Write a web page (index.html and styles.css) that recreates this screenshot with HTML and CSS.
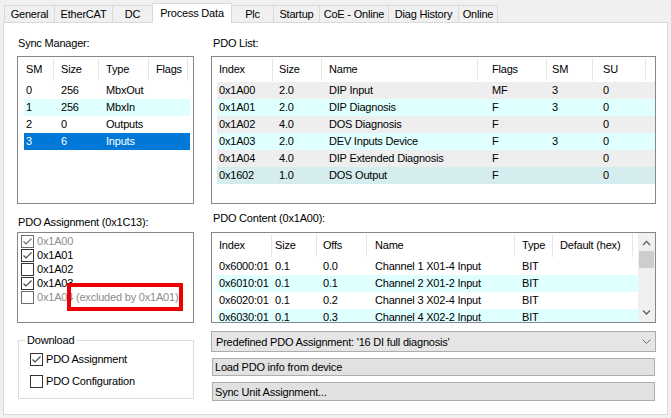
FILE: index.html
```html
<!DOCTYPE html>
<html>
<head>
<meta charset="utf-8">
<title>Process Data</title>
<link rel="stylesheet" href="styles.css">
</head>
<body>
<div class="tabbar">
  <div class="tab w-general">General</div>
  <div class="tab w-ethercat">EtherCAT</div>
  <div class="tab w-dc">DC</div>
  <div class="tab sel w-pd">Process Data</div>
  <div class="tab w-plc">Plc</div>
  <div class="tab w-startup">Startup</div>
  <div class="tab w-coe">CoE - Online</div>
  <div class="tab w-diag">Diag History</div>
  <div class="tab w-online">Online</div>
</div>
<div class="panel">
  <div class="col-left">
    <div class="lbl">Sync Manager:</div>
    <div class="lv sm">
      <div class="lv-head">
        <div class="th c1">SM</div><div class="th c2">Size</div><div class="th c3">Type</div><div class="th c4">Flags</div>
      </div>
      <div class="lv-body">
        <div class="tr"><div class="td c1">0</div><div class="td c2">256</div><div class="td c3">MbxOut</div><div class="td c4"></div></div>
        <div class="tr cyan"><div class="td c1">1</div><div class="td c2">256</div><div class="td c3">MbxIn</div><div class="td c4"></div></div>
        <div class="tr"><div class="td c1">2</div><div class="td c2">0</div><div class="td c3">Outputs</div><div class="td c4"></div></div>
        <div class="tr selrow"><div class="td c1">3</div><div class="td c2">6</div><div class="td c3">Inputs</div><div class="td c4"></div></div>
      </div>
    </div>

    <div class="lbl lbl-assign">PDO Assignment (0x1C13):</div>
    <div class="assign">
      <div class="ck-row dis"><span class="cb"><svg viewBox="0 0 11 11" width="11" height="11"><path d="M1.5 5.5 L4 8 L9.5 2.5" /></svg></span><span class="ck-text">0x1A00</span></div>
      <div class="ck-row"><span class="cb"><svg viewBox="0 0 11 11" width="11" height="11"><path d="M1.5 5.5 L4 8 L9.5 2.5" /></svg></span><span class="ck-text">0x1A01</span></div>
      <div class="ck-row"><span class="cb"></span><span class="ck-text">0x1A02</span></div>
      <div class="ck-row"><span class="cb"><svg viewBox="0 0 11 11" width="11" height="11"><path d="M1.5 5.5 L4 8 L9.5 2.5" /></svg></span><span class="ck-text">0x1A03</span></div>
      <div class="ck-row dis"><span class="cb"></span><span class="ck-text">0x1A04 (excluded by 0x1A01)</span></div>
      <div class="redmark"></div>
    </div>

    <fieldset class="download">
      <legend>Download</legend>
      <div class="dl-row"><span class="cb"><svg viewBox="0 0 11 11" width="11" height="11"><path d="M1.5 5.5 L4 8 L9.5 2.5" /></svg></span><span class="ck-text">PDO Assignment</span></div>
      <div class="dl-row"><span class="cb"></span><span class="ck-text">PDO Configuration</span></div>
    </fieldset>
  </div>

  <div class="col-right">
    <div class="lbl">PDO List:</div>
    <div class="lv pl">
      <div class="lv-head">
        <div class="th c1">Index</div><div class="th c2">Size</div><div class="th c3">Name</div><div class="th c4">Flags</div><div class="th c5">SM</div><div class="th c6">SU</div>
      </div>
      <div class="lv-body">
        <div class="tr gray"><div class="td c1">0x1A00</div><div class="td c2">2.0</div><div class="td c3">DIP Input</div><div class="td c4">MF</div><div class="td c5">3</div><div class="td c6">0</div></div>
        <div class="tr cyan"><div class="td c1">0x1A01</div><div class="td c2">2.0</div><div class="td c3">DIP Diagnosis</div><div class="td c4">F</div><div class="td c5">3</div><div class="td c6">0</div></div>
        <div class="tr gray"><div class="td c1">0x1A02</div><div class="td c2">4.0</div><div class="td c3">DOS Diagnosis</div><div class="td c4">F</div><div class="td c5"></div><div class="td c6">0</div></div>
        <div class="tr cyan"><div class="td c1">0x1A03</div><div class="td c2">2.0</div><div class="td c3">DEV Inputs Device</div><div class="td c4">F</div><div class="td c5">3</div><div class="td c6">0</div></div>
        <div class="tr gray"><div class="td c1">0x1A04</div><div class="td c2">4.0</div><div class="td c3">DIP Extended Diagnosis</div><div class="td c4">F</div><div class="td c5"></div><div class="td c6">0</div></div>
        <div class="tr teal"><div class="td c1">0x1602</div><div class="td c2">1.0</div><div class="td c3">DOS Output</div><div class="td c4">F</div><div class="td c5"></div><div class="td c6">0</div></div>
      </div>
    </div>

    <div class="lbl lbl-content">PDO Content (0x1A00):</div>
    <div class="lv pc">
      <div class="pc-main">
        <div class="lv-head">
          <div class="th c1">Index</div><div class="th c2">Size</div><div class="th c3">Offs</div><div class="th c4">Name</div><div class="th c5">Type</div><div class="th c6">Default (hex)</div>
        </div>
        <div class="lv-body">
          <div class="tr"><div class="td c1">0x6000:01</div><div class="td c2">0.1</div><div class="td c3">0.0</div><div class="td c4">Channel 1 X01-4 Input</div><div class="td c5">BIT</div><div class="td c6"></div></div>
          <div class="tr cyan"><div class="td c1">0x6010:01</div><div class="td c2">0.1</div><div class="td c3">0.1</div><div class="td c4">Channel 2 X01-2 Input</div><div class="td c5">BIT</div><div class="td c6"></div></div>
          <div class="tr"><div class="td c1">0x6020:01</div><div class="td c2">0.1</div><div class="td c3">0.2</div><div class="td c4">Channel 3 X02-4 Input</div><div class="td c5">BIT</div><div class="td c6"></div></div>
          <div class="tr cyan"><div class="td c1">0x6030:01</div><div class="td c2">0.1</div><div class="td c3">0.3</div><div class="td c4">Channel 4 X02-2 Input</div><div class="td c5">BIT</div><div class="td c6"></div></div>
        </div>
      </div>
      <div class="vscroll">
        <div class="sb-btn"><svg width="17" height="17" viewBox="0 0 17 17"><polyline points="5,12 8.5,8.5 12,12" /></svg></div>
        <div class="sb-thumb"></div>
        <div class="sb-space"></div>
        <div class="sb-btn"><svg width="17" height="17" viewBox="0 0 17 17"><polyline points="5,5.5 8.5,9 12,5.5" /></svg></div>
      </div>
    </div>

    <div class="combo">
      <span class="combo-text">Predefined PDO Assignment: '16 DI full diagnosis'</span>
      <svg class="combo-arrow" width="9" height="5" viewBox="0 0 9 5"><polyline points="0.5,0.5 4.5,4.5 8.5,0.5" /></svg>
    </div>
    <div class="btn btn1">Load PDO info from device</div>
    <div class="btn btn2">Sync Unit Assignment...</div>
  </div>
</div>
</body>
</html>
```

FILE: styles.css
```css
* {
  box-sizing: border-box;
}

body {
  margin: 0;
  width: 671px;
  height: 418px;
  overflow: hidden;
  background: #f0f0f0;
  font-family: "Liberation Sans", Arial, sans-serif;
  font-size: 11px;
  letter-spacing: -0.2px;
  color: #000;
}

/* Tabs */
.tabbar {
  height: 22px;
  display: flex;
  align-items: flex-end;
  padding-left: 4px;
}

.tab {
  height: 17px;
  margin-left: -1px;
  padding-top: 1px;
  border: 1px solid #d9d9d9;
  border-bottom: none;
  background: #f0f0f0;
  text-align: center;
  line-height: 15px;
  white-space: nowrap;
}

.tab:first-child {
  margin-left: 0;
}

.tab.sel {
  height: 20px;
  margin-bottom: -1px;
  line-height: 16px;
  background: #fff;
  position: relative;
  z-index: 1;
}

.w-general { width: 51px; }
.w-ethercat { width: 59px; }
.w-dc { width: 41px; }
.w-pd { width: 80px; }
.w-plc { width: 43px; }
.w-startup { width: 47px; }
.w-coe { width: 70px; }
.w-diag { width: 71px; }
.w-online { width: 40px; }

/* Panel */
.panel {
  margin-left: 3px;
  width: 665px;
  height: 393px;
  border: 1px solid #d9d9d9;
  background: #fff;
  display: flex;
  align-items: flex-start;
  gap: 17px;
  padding: 13px 0 0 13px;
}

.col-left {
  width: 177px;
  display: flex;
  flex-direction: column;
}

.col-right {
  width: 445px;
  display: flex;
  flex-direction: column;
}

.lbl {
  height: 14px;
  line-height: 14px;
  margin-bottom: 6px;
  padding-left: 1px;
  white-space: nowrap;
}

.col-right .lbl {
  padding-left: 2px;
}

.lbl-assign {
  margin-top: 11px;
  margin-bottom: 3px;
}

.lbl-content {
  margin-top: 7px;
  margin-bottom: 7px;
}

/* List views */
.lv {
  border: 1px solid #828790;
  background: #fff;
  overflow: hidden;
}

.lv.sm,
.lv.pl {
  height: 148px;
}

.lv-head {
  height: 25px;
  display: flex;
}

.th {
  height: 23px;
  margin-top: 1px;
  line-height: 23px;
  border-right: 1px solid #e5e5e5;
  white-space: nowrap;
  overflow: hidden;
  flex: none;
}

.tr {
  display: flex;
  height: 17px;
  line-height: 17px;
}

.td {
  white-space: nowrap;
  overflow: hidden;
  flex: none;
}

.tr.cyan { background: #e0ffff; }
.tr.gray { background: #eeeeee; }
.tr.teal { background: #d5edef; }
.tr.selrow { background: #0078d7; color: #fff; }

/* Sync manager columns */
.sm .lv-head,
.sm .lv-body {
  padding-left: 6px;
}

.sm .tr { width: 166px; }
.sm .c1 { width: 30px; padding-left: 2px; }
.sm .c2 { width: 45px; padding-left: 7px; }
.sm .c3 { width: 50px; padding-left: 7px; }
.sm .c4 { width: 39px; padding-left: 7px; }
.sm .tr .c4 { width: 41px; }

/* PDO list columns */
.pl .lv-head,
.pl .lv-body {
  padding-left: 5px;
}

.pl .c1 { width: 56px; padding-left: 2px; }
.pl .c2 { width: 49px; padding-left: 6px; }
.pl .c3 { width: 156px; padding-left: 7px; }
.pl .c4 { width: 69px; padding-left: 14px; }
.pl .c5 { width: 46px; padding-left: 5px; }
.pl .c6 { width: 53px; padding-left: 10px; }

/* PDO content */
.lv.pc {
  height: 91px;
  display: flex;
}

.pc-main {
  flex: 1;
  padding-left: 5px;
  overflow: hidden;
}

.pc .c1 { width: 55px; padding-left: 2px; }
.pc .c2 { width: 45px; padding-left: 3px; }
.pc .c3 { width: 50px; padding-left: 6px; }
.pc .c4 { width: 148px; padding-left: 8px; }
.pc .c5 { width: 38px; padding-left: 7px; }
.pc .c6 { width: 80px; padding-left: 7px; }

.vscroll {
  width: 17px;
  flex: none;
  background: #f0f0f0;
  display: flex;
  flex-direction: column;
}

.sb-btn {
  height: 17px;
  flex: none;
}

.sb-btn svg {
  display: block;
}

.sb-btn polyline {
  fill: none;
  stroke: #606060;
  stroke-width: 1.3;
}

.sb-thumb {
  height: 17px;
  margin: 1px 1px 0 1px;
  background: #cdcdcd;
  flex: none;
}

.sb-space {
  flex: 1;
}

/* PDO assignment checklist */
.assign {
  height: 91px;
  border: 1px solid #828790;
  background: #fff;
  padding: 1px 0 0 3px;
  position: relative;
}

.ck-row {
  height: 14px;
  display: flex;
  align-items: center;
  white-space: nowrap;
}

.cb {
  width: 13px;
  height: 13px;
  border: 1px solid #333;
  background: #fff;
  flex: none;
  display: block;
}

.cb svg {
  display: block;
}

.cb path {
  fill: none;
  stroke: #444;
  stroke-width: 1.1;
}

.ck-text {
  margin-left: 3px;
}

.ck-row.dis {
  color: #8c8c8c;
}

.ck-row.dis .cb {
  border-color: #6d6d6d;
}

.ck-row.dis .cb path {
  stroke: #707070;
}

.redmark {
  position: absolute;
  left: 49px;
  top: 50px;
  width: 116px;
  height: 28px;
  border: 4px solid #ee0000;
}

/* Download group */
.download {
  margin: 10px 0 0 1px;
  width: 176px;
  border: 1px solid #dcdcdc;
  padding: 1px 0 6px 11px;
  min-inline-size: 0;
}

.download legend {
  margin-left: -5px;
  padding: 0 2px;
  line-height: 14px;
  height: 14px;
}

.dl-row {
  height: 22px;
  display: flex;
  align-items: center;
  white-space: nowrap;
}

/* Combo and buttons */
.combo {
  margin-top: 8px;
  height: 21px;
  border: 1px solid #adadad;
  background: #e5e5e5;
  display: flex;
  align-items: center;
  justify-content: space-between;
  padding: 0 4px 0 4px;
  white-space: nowrap;
}

.combo-arrow {
  display: block;
  margin-right: 0;
}

.combo-arrow polyline {
  fill: none;
  stroke: #707070;
  stroke-width: 1;
}

.btn {
  margin: 6px 1px 0 1px;
  border: 1px solid #adadad;
  background: #e1e1e1;
  padding-left: 2px;
  white-space: nowrap;
  display: flex;
  align-items: center;
}

.btn1 {
  height: 18px;
}

.btn2 {
  height: 19px;
}
```
